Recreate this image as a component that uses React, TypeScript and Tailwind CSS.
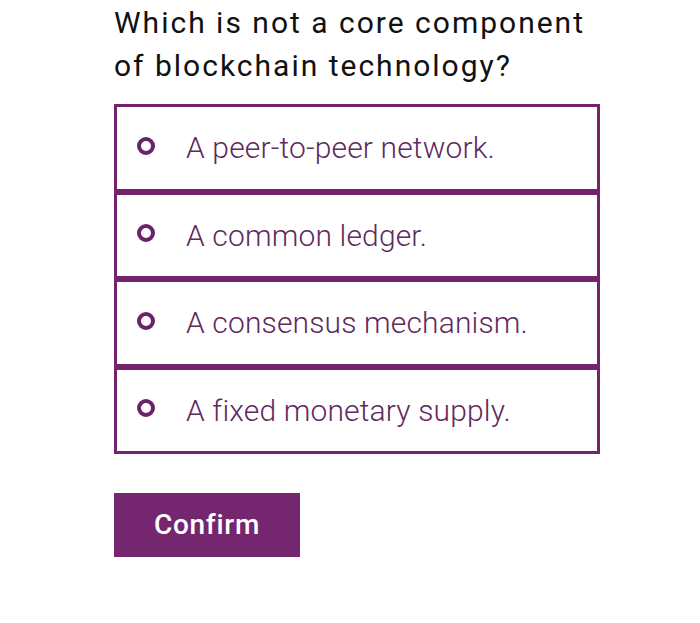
const options = [
  "A peer-to-peer network.",
  "A common ledger.",
  "A consensus mechanism.",
  "A fixed monetary supply.",
];

export default function App() {
  return (
    <div className="w-[700px] h-[623px] bg-white font-['Roboto',sans-serif]">
      <div className="pl-[114px] pt-[1px] w-[660px]">
        <h1 className="text-[30px] leading-[43px] tracking-[2px] text-[#111] font-normal">
          Which is not a core component
          <br />
          of blockchain technology?
        </h1>
        <div className="mt-[17px] w-[486px] flex flex-col">
          {options.map((o) => (
            <label
              key={o}
              className="h-[87.5px] border-[3px] border-[#74246e] flex items-center gap-[31px] pl-[20px]"
            >
              <span className="w-[18px] h-[18px] -mt-[4px] rounded-full border-[4px] border-[#6a2268] shrink-0" />
              <span className="text-[30px] font-light text-[#5f2a5e] tracking-[0.15px]">{o}</span>
            </label>
          ))}
        </div>
        <button className="mt-[39px] w-[186px] h-[64px] bg-[#74266f] text-white text-[28px] font-medium tracking-[0.7px]">
          Confirm
        </button>
      </div>
    </div>
  );
}
